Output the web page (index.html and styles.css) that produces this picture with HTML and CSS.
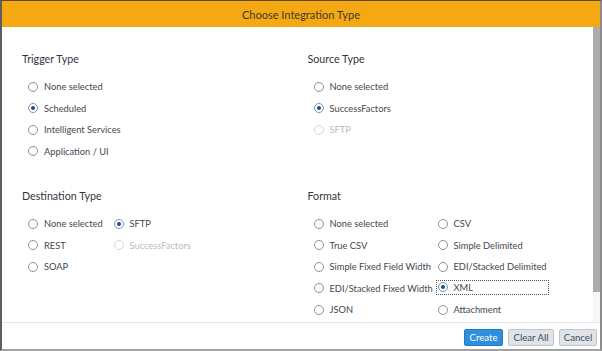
FILE: index.html
```html
<!DOCTYPE html>
<html>
<head>
<meta charset="utf-8">
<link rel="stylesheet" href="styles.css">
</head>
<body>
<div class="dialog">
  <header class="dlg-header">Choose Integration Type</header>
  <div class="dlg-body">
    <div class="dlg-content">
      <section class="group">
        <h2 class="group-title">Trigger Type</h2>
        <div class="options">
          <div class="opt"><span class="hit"><span class="radio"></span>None selected</span></div>
          <div class="opt"><span class="hit"><span class="radio on"></span>Scheduled</span></div>
          <div class="opt"><span class="hit"><span class="radio"></span>Intelligent Services</span></div>
          <div class="opt"><span class="hit"><span class="radio"></span>Application / UI</span></div>
        </div>
      </section>
      <section class="group">
        <h2 class="group-title">Source Type</h2>
        <div class="options">
          <div class="opt"><span class="hit"><span class="radio"></span>None selected</span></div>
          <div class="opt"><span class="hit"><span class="radio on"></span>SuccessFactors</span></div>
          <div class="opt disabled"><span class="hit"><span class="radio"></span>SFTP</span></div>
        </div>
      </section>
      <section class="group">
        <h2 class="group-title">Destination Type</h2>
        <div class="options cols-dest">
          <div class="opt"><span class="hit"><span class="radio"></span>None selected</span></div>
          <div class="opt"><span class="hit"><span class="radio on"></span>SFTP</span></div>
          <div class="opt"><span class="hit"><span class="radio"></span>REST</span></div>
          <div class="opt disabled"><span class="hit"><span class="radio"></span>SuccessFactors</span></div>
          <div class="opt"><span class="hit"><span class="radio"></span>SOAP</span></div>
        </div>
      </section>
      <section class="group">
        <h2 class="group-title">Format</h2>
        <div class="options cols-format">
          <div class="opt"><span class="hit"><span class="radio"></span>None selected</span></div>
          <div class="opt"><span class="hit"><span class="radio"></span>CSV</span></div>
          <div class="opt"><span class="hit"><span class="radio"></span>True CSV</span></div>
          <div class="opt"><span class="hit"><span class="radio"></span>Simple Delimited</span></div>
          <div class="opt"><span class="hit"><span class="radio"></span>Simple Fixed Field Width</span></div>
          <div class="opt"><span class="hit"><span class="radio"></span>EDI/Stacked Delimited</span></div>
          <div class="opt"><span class="hit"><span class="radio"></span>EDI/Stacked Fixed Width</span></div>
          <div class="opt focus"><span class="hit"><span class="radio on"></span>XML</span></div>
          <div class="opt"><span class="hit"><span class="radio"></span>JSON</span></div>
          <div class="opt"><span class="hit"><span class="radio"></span>Attachment</span></div>
        </div>
      </section>
    </div>
    <div class="scrollbar"><div class="thumb"></div></div>
  </div>
  <footer class="dlg-footer">
    <button class="btn btn-primary">Create</button>
    <button class="btn">Clear All</button>
    <button class="btn">Cancel</button>
  </footer>
</div>
</body>
</html>
```
FILE: styles.css
```css
* { box-sizing: border-box; }
html, body { margin: 0; padding: 0; background: #fff; }
body { font-family: "Lato", "Liberation Sans", sans-serif; color: #32363a; }

.dialog {
  width: 602px;
  height: 351px;
  display: flex;
  flex-direction: column;
  border-top: 1px solid #5c4a2a;
  border-left: 2px solid #5e5e5e;
  border-right: 2px solid #8c8c8c;
  border-bottom: 2px solid #a2a2a2;
  background: #fff;
}

.dlg-header {
  height: 26px;
  flex: 0 0 26px;
  background: #f4a912;
  color: #3e3a33;
  font-size: 11px;
  display: flex;
  align-items: center;
  justify-content: center;
}

.dlg-body {
  flex: 1;
  display: flex;
  min-height: 0;
}

.dlg-content {
  flex: 1;
  display: grid;
  grid-template-columns: 285.5px 1fr;
  row-gap: 27px;
  align-content: start;
  padding: 25px 0 0 20px;
}

.group-title {
  margin: 0 0 10px 0;
  font-size: 10.7px;
  font-weight: 400;
  line-height: 14px;
  color: #32363a;
}

.options {
  display: grid;
  grid-template-columns: 1fr;
  padding-left: 6px;
}
.cols-dest { grid-template-columns: 85.5px 1fr; }
.cols-format { grid-template-columns: 124px 1fr; }

.opt {
  height: 21.5px;
  display: flex;
  align-items: center;
  font-size: 9.3px;
  color: #44484c;
  white-space: nowrap;
}
.hit {
  display: inline-flex;
  align-items: center;
  height: 13px;
}
.radio {
  width: 10px;
  height: 10px;
  border-radius: 50%;
  border: 1px solid #8d9296;
  background: #fff;
  margin-right: 6px;
  display: inline-flex;
  align-items: center;
  justify-content: center;
  flex: 0 0 10px;
}
.radio.on { border-color: #7f93a8; }
.radio.on::after {
  content: "";
  width: 4px;
  height: 4px;
  border-radius: 50%;
  background: #1b4f86;
}
.disabled { color: #b9bbbd; }
.disabled .radio { border-color: #d4d6d8; }

.focus .hit {
  outline: 1px dotted #555;
  outline-offset: 0;
  width: 111px;
  margin-left: -1px;
  padding-left: 1px;
  margin-top: -2px;
}

.scrollbar {
  width: 7px;
  flex: 0 0 7px;
  background: #f6f6f6;
}
.thumb {
  height: 265px;
  background: #acacac;
}

.dlg-footer {
  flex: 0 0 27px;
  border-top: 1px solid #e6e6e6;
  display: flex;
  justify-content: flex-end;
  align-items: flex-start;
  gap: 5px;
  padding: 6px 3px 0 0;
}
.btn {
  height: 17px;
  padding: 0;
  font-family: "Lato", "Liberation Sans", sans-serif;
  font-size: 9.6px;
  border-radius: 2px;
  border: 1px solid #bfc5cb;
  background: #e1e4e7;
  color: #3c4c5e;
  width: 38px;
}
.btn + .btn { width: 46px; }
.btn + .btn + .btn { width: 38px; }
.btn-primary {
  background: #2f8fdc;
  border-color: #1c7cc8;
  color: #fff;
  width: 39px;
}
```
